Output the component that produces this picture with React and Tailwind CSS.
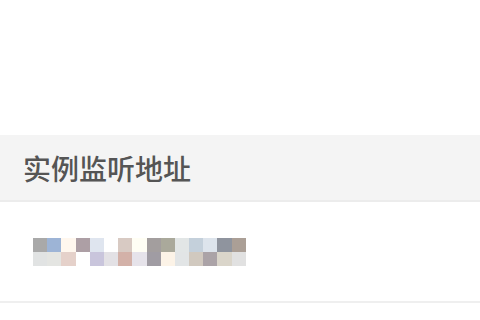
import React from "react";

const mosaic = [
  ["#a9a9a9", "#9db4d6", "#fff7ee", "#ad9fa5", "#dfe5ef", "#ffffff", "#d8cac3", "#fffef4", "#a39e9e", "#aaa99b", "#e2e6e6", "#c4d0db", "#dde4ec", "#8f949e", "#ab9f96"],
  ["#e1e3e3", "#e4e5e2", "#e5d1ca", "#ffffff", "#c9c5dc", "#e3e1e5", "#d3b1a8", "#e6e3ea", "#a09ca3", "#fcf3e7", "#e2e5e6", "#d1c9bf", "#aba3a7", "#dad5ca", "#e1e1e1"],
];

function App() {
  return (
    <div className="w-[480px] h-[320px] bg-white overflow-hidden" style={{ fontFamily: '"Noto Sans CJK SC", "Noto Sans", sans-serif' }}>
      <div className="h-[135px]" />

      {/* table header */}
      <div className="h-[67px] bg-[#f4f4f4] border-b-2 border-[#ececec] flex items-center pl-[23px]">
        <span className="text-[28px] leading-none font-medium text-[#555555]">实例监听地址</span>
      </div>

      {/* row with blurred address */}
      <div className="h-[101px] border-b-2 border-[#efefef] flex items-center pl-[33px]">
        <div className="flex flex-col">
          {mosaic.map((row, i) => (
            <div key={i} className="flex h-[14px]">
              {row.map((c, j) => (
                <div key={j} className="w-[14.2px] h-full" style={{ backgroundColor: c }} />
              ))}
            </div>
          ))}
        </div>
      </div>
    </div>
  );
}

export default App;
